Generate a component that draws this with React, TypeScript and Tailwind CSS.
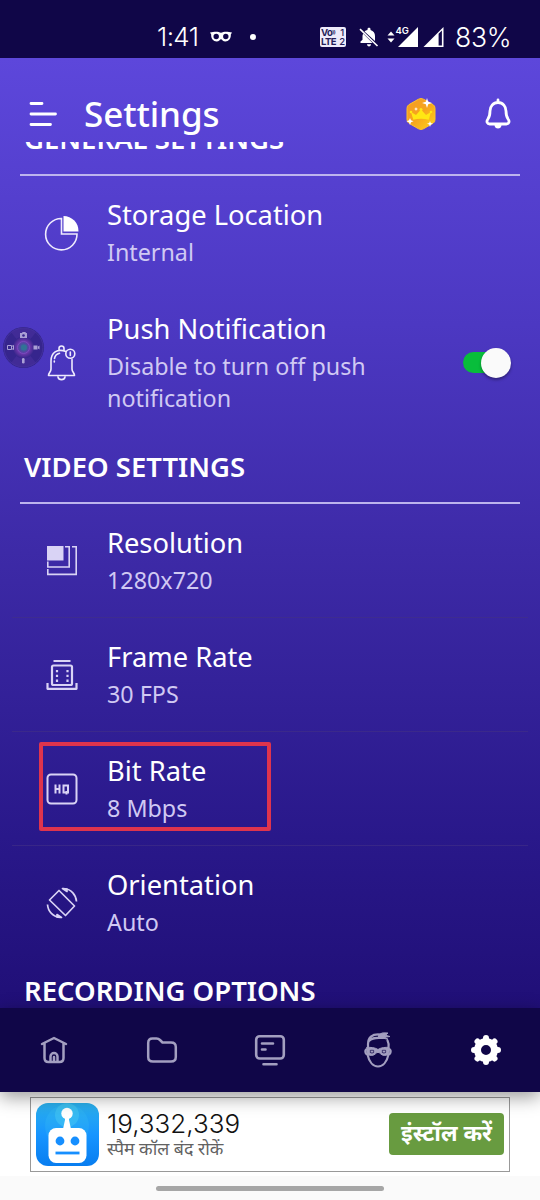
import type { ReactNode } from "react";

const noto = "font-['Noto_Sans','Noto_Sans_Devanagari',sans-serif]";

function StatusBar() {
  return (
    <div className="flex h-[58px] shrink-0 items-center bg-[#100648] pt-4 text-white font-['Inter',sans-serif] font-light">
      <span className="ml-[157px] w-[44px] whitespace-nowrap text-[26px] leading-[30px] tracking-[-0.6px]">1:41</span>
      <svg className="ml-[9px]" width="22" height="12" viewBox="0 0 22 12">
        <path fill="#fff" fillRule="evenodd" d="M0 1.5 3 1C6 .3 9 .7 11 1.8 13 .7 16 .3 19 1l3 .5-1.2 2c.4 4-2.2 7-5.4 7-2.5 0-3.4-2.3-4.4-2.3S9.100 10.500 6.600 10.500C3.400 10.500.800 7.500 1.200 3.500ZM6.200 2.800a2.700 2.700 0 1 0 0 5.400 2.700 2.700 0 0 0 0-5.400Zm9.600 0a2.700 2.700 0 1 0 0 5.400 2.700 2.700 0 0 0 0-5.400Z" />
      </svg>
      <span className="ml-[18px] size-[6px] rounded-full bg-white" />
      <div className="ml-[64px] grid h-[20px] w-[26px] grid-cols-[18px_6px] content-center justify-center rounded-[2px] bg-[#eeebfa] text-[9.500px] font-bold leading-[9px] tracking-[-0.5px] text-[#251d58]">
        <span className="whitespace-nowrap">Vo<sup className="text-[5px] leading-none">))</sup></span><span className="text-center font-medium">1</span>
        <span>LTE</span><span className="text-center font-medium">2</span>
      </div>
      <svg className="ml-[13px]" width="20" height="20" viewBox="0 0 20 20">
        <path fill="#fff" d="M10 .8c1 0 1.500.6 1.500 1.400v.7c3 .8 4.500 3.400 4.500 6.100v5L5.500 4.500C6.300 3.700 7.300 3.100 8.500 2.900v-.7C8.500 1.400 9 .8 10 .8ZM4.300 6.800 13.500 16H1.500v-1.500l2-1.700V9c0-.8.3-1.500.8-2.200ZM8 17.300h4c0 2.800-4 2.800-4 0Z" />
        <path stroke="#fff" strokeWidth="1.600" d="M1 2.200 18.500 19" />
      </svg>
      <svg className="ml-[8px]" width="32" height="22" viewBox="0 0 32 22">
        <path fill="#fff" d="m.500 9.500 3.500-4 3.500 4Zm0 3 3.500 4 3.500-4ZM31 1v20H11Z" />
        <path fill="#100648" d="M8 0h13.500v9H8z" />
        <text x="8.500" y="8" fill="#fff" fontSize="9.500" fontWeight="600" fontFamily="Inter">4G</text>
      </svg>
      <svg className="ml-[4px]" width="21" height="20" viewBox="0 0 21 20">
        <path fill="#fff" fillRule="evenodd" d="M20.500 0v20H.500Zm-1.600 3.500-3.300 3.300v11.700h3.300Z" />
      </svg>
      <span className="ml-[11px] whitespace-nowrap text-[26.500px] leading-[30px] tracking-[-0.2px]">83%</span>
    </div>
  );
}

function Header() {
  return (
    <header className="flex h-[84px] shrink-0 items-center pt-[28px]">
      <svg className="ml-[29px]" width="28" height="26" viewBox="0 0 28 26">
        <path stroke="#fff" strokeWidth="2.800" strokeLinecap="round" d="M2 2.500h11M2 13h24.500M2 23.500h19.500" />
      </svg>
      <h1 className="ml-[27px] w-[140px] whitespace-nowrap pb-px text-[35px] font-medium leading-[48px] tracking-[-0.1px]">Settings</h1>
      <svg className="ml-[182px]" width="30" height="34" viewBox="0 0 30 34">
        <defs>
          <linearGradient id="gem" x1="0" y1="0" x2="1" y2="1"><stop stopColor="#f49b28" /><stop offset=".5" stopColor="#f6a51d" /><stop offset="1" stopColor="#ffd51c" /></linearGradient>
        </defs>
        <path fill="url(#gem)" stroke="#ffc12b" d="M12.500 2.200q2.500-1.400 5 0l9.500 5.400q2 1.200 2 3.600v11.500q0 2.400-2 3.600l-9.500 5.500q-2.500 1.400-5 0L3 26.300q-2-1.200-2-3.600V11.200q0-2.400 2-3.600Z" />
        <path fill="#ffe713" d="m5 15 5 3 5-5.500 5 5.500 5-3-2.300 7.800q-7.700-2-15.400 0Z" />
        <circle cx="5" cy="15" r="1.300" fill="#ffe713" /><circle cx="15" cy="12.500" r="1.500" fill="#ffe713" /><circle cx="25" cy="15" r="1.300" fill="#ffe713" />
        <path fill="#fff" d="m21 1 1.200 3.800L26 6l-3.800 1.200L21 11l-1.200-3.800L16 6l3.800-1.200ZM4 21l1 2.300 2.500 1L5 25.200 4 28l-1-2.800-2.500-.9 2.500-1ZM24 24l.8 2 2.200.8-2.200.8L24 30l-.8-2.400-2.200-.8 2.200-.8ZM10 10l.6 1.500 1.500.5-1.500.6L10 14l-.6-1.400L8 12l1.400-.5Z" />
      </svg>
      <svg className="ml-[49px]" width="26" height="32" viewBox="0 0 26 32">
        <path fill="none" stroke="#fff" strokeWidth="2.800" strokeLinejoin="round" strokeLinecap="round" d="M13 2v2.500M13 4.500C8 4.500 5 8.500 5 13c0 4.500-.8 6.500-2.300 8.500-1.500 2-.5 4.500 2 4.500h16.600c2.500 0 3.500-2.500 2-4.500C21.800 19.500 21 17.500 21 13c0-4.500-3-8.500-8-8.500Z" />
        <path fill="#fff" d="M9.500 27h7c0 4.700-7 4.700-7 0Z" />
      </svg>
    </header>
  );
}

function Section({ title, className = "" }: { title: string; className?: string }) {
  return (
    <div className={`flex h-[68px] shrink-0 flex-col justify-end px-5 ${className}`}>
      <h2 className="mb-[16px] ml-[4px] whitespace-nowrap text-[27.500px] font-semibold leading-[38px]">{title}</h2>
      <div className="h-[2px] bg-[#bdb4ee]" />
    </div>
  );
}

function Row({ icon, title, sub, divider, children }: { icon: ReactNode; title: string; sub: string; divider?: boolean; children?: ReactNode }) {
  return (
    <div className="shrink-0 px-3">
      <div className={`flex items-center border-b ${divider ? "border-[#423086]/60" : "border-transparent"}`}>
        <div className="ml-[32px] flex w-[36px] shrink-0 justify-center">{icon}</div>
        <div className="ml-[27px] w-[290px] pt-[17px] pb-[21px]">
          <div className="whitespace-nowrap text-[27.300px] leading-[43px]">{title}</div>
          <div className="text-[23.300px] leading-[32px] text-[#d0c9f3]">{sub}</div>
        </div>
        {children}
      </div>
    </div>
  );
}

const PieIcon = (
  <svg width="36" height="36" viewBox="0 0 36 36">
    <path fill="none" stroke="#eeeafd" strokeWidth="1.600" d="M17.500 3.500A15.700 15.700 0 1 0 33 19H17.500Z" />
    <path fill="#fff" d="M19.500 1a15 15 0 0 1 15 15.500h-15Z" />
  </svg>
);

const BellIcon = (
  <svg width="36" height="38" viewBox="0 0 36 38" fill="none" stroke="#eeeafd" strokeWidth="1.600" strokeLinecap="round" strokeLinejoin="round">
    <path d="M22 7.500C13 4 7 9 7 17v8c0 3-2.500 4-2.500 6.500h26C30.500 29 28 28 28 25v-9.500M15 6V4.500a2.500 2.500 0 0 1 5 0V6M14 33c.8 3.500 6.200 3.500 7 0M10.500 14.500c.5-2.800 2.200-4.500 5-5.200M10.300 17v1" />
    <circle cx="26.300" cy="9.800" r="4.500" /><path d="M26.300 8v3.500" />
  </svg>
);

const ResolutionIcon = (
  <svg width="32" height="32" viewBox="0 0 32 32" fill="none" stroke="#d9d3f5" strokeWidth="1.600">
    <path fill="#d9d3f5" stroke="none" d="M1 1h16.500v14.500H1z" />
    <path d="M19 1.700h4.200V22H1.800v-5.500M26 1.700h4.200v27.700H1.800V24" />
  </svg>
);

const FrameIcon = (
  <svg width="32" height="32" viewBox="0 0 32 32" fill="none" stroke="#d9d3f5" strokeWidth="2.200" strokeLinejoin="round">
    <path d="M7.500 2h17M1.500 24v5.800h29V24" />
    <rect x="6" y="6.500" width="20" height="19.500" rx="1.500" />
    <path strokeDasharray="2.300 2.500" d="M11 11v12M21.500 11v12" />
  </svg>
);

const HqIcon = (
  <svg width="32" height="32" viewBox="0 0 32 32" fill="none" stroke="#d9d3f5">
    <rect x="1.500" y="1.500" width="29" height="29" rx="3.500" strokeWidth="2" />
    <path strokeWidth="2" d="M9.500 11.500v9M13.500 11.500v9M9.500 16h4M17.500 12.500h4.500v7h-4.500ZM20.500 18v3.500" />
  </svg>
);

const RotateIcon = (
  <svg width="32" height="32" viewBox="0 0 32 32" fill="none" stroke="#d9d3f5" strokeWidth="1.700" strokeLinejoin="round">
    <path d="M13 3.500 28.500 19 19.500 28.500 3.500 13ZM1.500 17.500C2 24.500 7 30 14.500 30.500M30.500 14.500C30 7.500 25 2 17.500 1.500" />
    <path fill="#d9d3f5" d="m11 27.500 4.500 3-4.500-.5ZM21 4.500l-4.500-3 4.500.5Z" />
  </svg>
);

function Bubble() {
  return (
    <div className="absolute left-[3px] top-[327px] size-[41px] overflow-hidden rounded-full bg-[#34258a]">
      <svg width="41" height="41" viewBox="0 0 41 41">
        <defs><radialGradient id="lens"><stop stopColor="#3787a5" /><stop offset=".3" stopColor="#4651a0" /><stop offset=".6" stopColor="#6a37a8" /><stop offset="1" stopColor="#34258a" /></radialGradient></defs>
        <circle cx="20.500" cy="20.500" r="19.500" fill="#36258d" stroke="#44329f" />
        <path fill="#49309c" d="M8 5q12-8 25 0L26 14H15ZM8 36q12 8 25 0L26 27H15Z" opacity=".6" />
        <circle cx="20.500" cy="20.500" r="11" fill="url(#lens)" />
        <circle cx="20.500" cy="20.500" r="6" fill="none" stroke="#7b4ac0" /><circle cx="21" cy="20.500" r="3" fill="#327296" />
        <g fill="#aaa0d5"><path d="M17 6h2l.6-1h2.800l.6 1h1v5h-7ZM30.500 18.500h4v4h-4ZM35 19.500l1.500-1v4l-1.500-1Z" /><rect x="19" y="31" width="2.600" height="5.500" rx="1.300" /></g>
        <circle cx="20.500" cy="8.500" r="1.300" fill="#36258d" /><path fill="none" stroke="#aaa0d5" d="M4.500 18.500h4v4h-4Zm4 1 2-1v4l-2-1" />
      </svg>
    </div>
  );
}

function BottomNav() {
  const gray = "#a39fc0";
  return (
    <nav className="z-10 grid h-[84px] shrink-0 grid-cols-5 place-items-center bg-[#100648] shadow-[0_5px_17px_rgba(0,0,0,0.4)]">
      <svg width="32" height="32" viewBox="0 0 32 32" fill="none" stroke={gray} strokeWidth="2.500" strokeLinejoin="round" strokeLinecap="round">
        <path d="M4 10 16 4l12 6M6.500 9.500V24q0 4 4 4h11q4 0 4-4V9.500M12.500 27.500v-5a3.500 3.500 0 0 1 7 0v5M16 23v4.500" />
      </svg>
      <svg width="32" height="28" viewBox="0 0 32 28" fill="none" stroke={gray} strokeWidth="2.500" strokeLinejoin="round">
        <path d="M2.200 7Q2.200 2.500 6.500 2.500h4q2 0 3.500 1.500l2.500 2.500h8.500q4.800 0 4.800 4.500v10q0 4.500-4.800 4.500H7Q2.200 25.500 2.200 21Z" />
      </svg>
      <svg width="32" height="32" viewBox="0 0 32 32" fill="none" stroke={gray} strokeWidth="2.600" strokeLinecap="round">
        <rect x="2.200" y="2.200" width="27.600" height="22.300" rx="3.500" /><path d="M8 9.500h11M8 15.500h3.500M9.500 30.300h13" />
      </svg>
      <svg width="30" height="38" viewBox="0 0 30 38" fill="none" stroke={gray} strokeWidth="2.200" strokeLinejoin="round" strokeLinecap="round">
        <path d="M5 17v-4C5 6.500 9 3 16.500 3.500M6 10c4-4 8-3 14-3M24.500 9.500c1 2 1.500 5 1 7.500" />
        <path fill={gray} strokeWidth="1" d="M15.500 3.500Q19 1 25 2l-2.500 2.300L27 5.500l-5.500.8 3.500 2-9-2Z" />
        <path d="M4 18.500c-2.500-.5-2 4.500.5 5C6 30.500 10 35.500 15 35.500s9-5 10.500-12c2.500-.5 3-5.500.5-5" />
        <path fill={gray} fillRule="evenodd" strokeWidth="1" d="M4 16.500c3-.5 8 0 11 2 3-2 8-2.500 11-2 1 5-.5 8-4.500 8-3.500 0-4.500-3.200-6.500-3.200S12 24.500 8.500 24.500C4.500 24.500 3 21.500 4 16.500ZM9 18a2.500 2.500 0 1 0 0 5 2.500 2.500 0 0 0 0-5Zm12 0a2.500 2.500 0 1 0 0 5 2.500 2.500 0 0 0 0-5Z" />
        <path strokeWidth="1.200" d="M9 19.500v2M8 20.500h2M20 20.500h2M21 19.500v2" />
      </svg>
      <svg width="32" height="32" viewBox="0 0 32 32">
        <circle cx="16" cy="16" r="8.500" fill="none" stroke="#fff" strokeWidth="7" />
        <path stroke="#fff" strokeWidth="6" strokeLinecap="round" d="M16 4v2M16 26v2M4 16h2M26 16h2M7.500 7.500l1.500 1.500M23 23l1.500 1.500M24.500 7.500 23 9M9 23l-1.500 1.500" />
      </svg>
    </nav>
  );
}

function AdBanner() {
  return (
    <div className="flex h-[84px] shrink-0 items-start justify-center bg-white pt-[4.500px]">
      <div className="flex h-[75px] w-[480px] items-center border-[1.500px] border-[#999]">
        <svg className="ml-[5px]" width="63" height="63" viewBox="0 0 63 63">
          <defs><linearGradient id="robot" x1="0" y1="0" x2="0" y2="1"><stop stopColor="#2bb0ec" /><stop offset=".5" stopColor="#1795ff" /><stop offset="1" stopColor="#087df0" /></linearGradient></defs>
          <rect width="63" height="63" rx="12" fill="url(#robot)" />
          <circle cx="31" cy="23" r="22" fill="#43caf4" opacity=".2" /><circle cx="31" cy="12" r="12" fill="#55d8f3" opacity=".35" />
          <circle cx="31" cy="10.500" r="5.700" fill="#fff" /><path stroke="#fff" strokeWidth="4" d="M31 12v15" />
          <path fill="#fff" d="M29 17h4l2 9h-8Z" /><rect x="12.500" y="25" width="38" height="35" rx="7.500" fill="#fff" />
          <circle cx="24" cy="38" r="4.400" fill="#168fff" /><circle cx="39" cy="38" r="4.400" fill="#168fff" /><path stroke="#168fff" strokeWidth="2.800" strokeLinecap="butt" d="M19.500 50h24" />
        </svg>
        <div className="ml-[8px] w-[282px] pt-[2px]">
          <div className="whitespace-nowrap text-[26px] font-light leading-[27px] text-[#111] font-['Inter',sans-serif]">19,332,339</div>
          <div className="whitespace-nowrap text-[17.700px] leading-[23px] text-[#626262]">स्पैम कॉल बंद रोकें</div>
        </div>
        <div className="flex h-[42px] w-[115px] items-center justify-center whitespace-nowrap rounded-[4px] bg-[#689b40] pb-[2px] text-[22.500px] font-bold text-white">इंस्टॉल करें</div>
      </div>
    </div>
  );
}

export default function App() {
  return (
    <div className={`relative flex h-[1200px] w-[540px] flex-col overflow-hidden bg-[#100648] text-white ${noto}`}>
      <StatusBar />
      <div className="flex h-[950px] shrink-0 flex-col bg-[linear-gradient(180deg,#5d47db_0%,#4c38c2_28%,#3d2aa7_52%,#29188a_82%,#200f77_100%)]">
        <Header />
        <main className="flex h-[866px] flex-col overflow-hidden">
          <Section title="GENERAL SETTINGS" className="-mt-[34px]" />
          <Row icon={PieIcon} title="Storage Location" sub="Internal" />
          <Row icon={BellIcon} title="Push Notification" sub="Disable to turn off push notification">
            <div className="ml-[66px] flex h-[31px] w-[49px] items-center">
              <div className="flex h-[21px] w-[44px] items-center rounded-full bg-[#08bd3b] pl-[18px]">
                <div className="size-[30px] shrink-0 rounded-full bg-[#fafafa] shadow-[0_2px_3px_rgba(0,0,0,0.35)]" />
              </div>
            </div>
          </Row>
          <Section title="VIDEO SETTINGS" />
          <Row divider icon={ResolutionIcon} title="Resolution" sub="1280x720" />
          <Row divider icon={FrameIcon} title="Frame Rate" sub="30 FPS" />
          <Row divider icon={HqIcon} title="Bit Rate" sub="8 Mbps" />
          <Row icon={RotateIcon} title="Orientation" sub="Auto" />
          <Section title="RECORDING OPTIONS" />
        </main>
      </div>
      <BottomNav />
      <AdBanner />
      <div className="flex h-6 shrink-0 items-center justify-center bg-[#fafafa]">
        <div className="h-[5px] w-[228px] rounded-full bg-[#a6a6a6]" />
      </div>
      <Bubble />
      <div className="absolute left-[39px] top-[742px] h-[89px] w-[232px] rounded-[2px] border-4 border-[#df344d]" />
    </div>
  );
}
